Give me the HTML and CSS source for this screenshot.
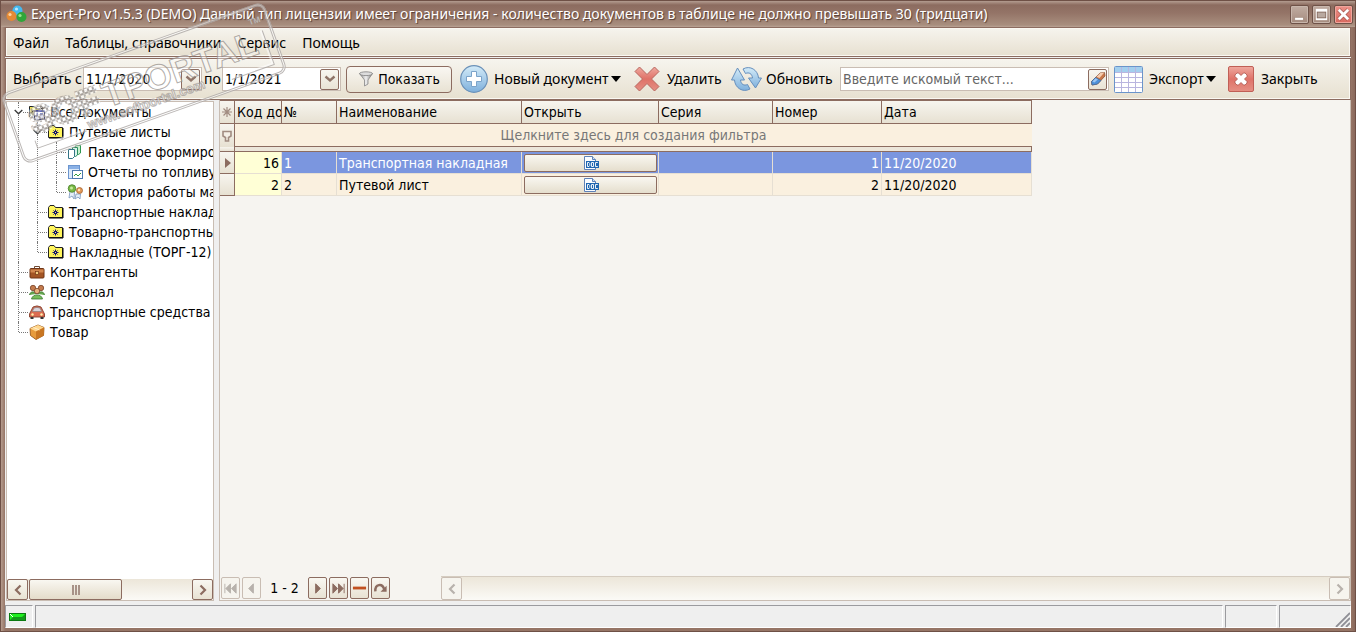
FILE: index.html
```html
<!DOCTYPE html>
<html lang="ru">
<head>
<meta charset="utf-8">
<title>Expert-Pro v1.5.3 (DEMO)</title>
<link rel="stylesheet" href="styles.css">
</head>
<body>
<svg class="defs" aria-hidden="true">
  <defs>
    <linearGradient id="blue" x1="0" y1="0" x2="0" y2="1"><stop offset="0" stop-color="#d3ebf8"/><stop offset="1" stop-color="#7fb0dc"/></linearGradient>
    <linearGradient id="red" x1="0" y1="0" x2="0" y2="1"><stop offset="0" stop-color="#efa99f"/><stop offset=".5" stop-color="#df7268"/><stop offset="1" stop-color="#e59084"/></linearGradient>
    <linearGradient id="metal" x1="0" y1="0" x2="1" y2="0"><stop offset="0" stop-color="#8a8a8a"/><stop offset=".5" stop-color="#f0f0f0"/><stop offset="1" stop-color="#777"/></linearGradient>
    <pattern id="dots" width="5" height="5" patternUnits="userSpaceOnUse"><rect x=".5" y=".5" width="4" height="4" rx="1" fill="#fff" fill-opacity=".5" stroke="#8e8783" stroke-opacity=".7" stroke-width=".9"/></pattern>
    <symbol id="folder" viewBox="0 0 16 16">
      <path d="M.5 13.500V3.500L2 1.500H6L7.500 3.500H14.500V13.500Z" fill="#fff55c" stroke="#222"/>
      <path d="M1 14H15V4" fill="none" stroke="#000" stroke-width="1"/>
      <path d="M7.500 5.500V11.500M4.500 8.500H10.500M5.500 6.500L9.500 10.500M9.500 6.500L5.500 10.500" stroke="#14146e" stroke-width="1"/>
      <rect x="7" y="8" width="1" height="1" fill="#fff55c"/>
    </symbol>
    <symbol id="doc" viewBox="0 0 16 16">
      <path d="M1.500 1.500H9.500L12.500 4.500V14.500H1.500Z" fill="#fafcff" stroke="#5e82b8"/>
      <path d="M9.500 1.500V4.500H12.500" fill="#cfe0f5" stroke="#5e82b8"/>
      <rect x="3" y="6" width="13" height="7" fill="#1f66b0"/>
      <path d="M4.500 7.500V11.500H6L6.800 10.500V8.500L6 7.500ZM8.500 7.500H10.500V11.500H8.500ZM14.800 7.500H12.500V11.500H14.800" fill="none" stroke="#fff" stroke-width=".9"/>
    </symbol>
    <symbol id="down" viewBox="0 0 12 8"><path d="M1.500 1.500L6 5.500L10.500 1.500" fill="none" stroke="#8f7468" stroke-width="2.400"/></symbol>
    <symbol id="left" viewBox="0 0 8 12"><path d="M6.500 1.500L2 6L6.500 10.500" fill="none" stroke="currentColor" stroke-width="2.200"/></symbol>
    <symbol id="right" viewBox="0 0 8 12"><path d="M1.500 1.500L6 6L1.500 10.500" fill="none" stroke="currentColor" stroke-width="2.200"/></symbol>
    <symbol id="open" viewBox="0 0 9 6"><path d="M.7 1L4.500 4.700L8.300 1" fill="none" stroke="#3b3b3b" stroke-width="1.400"/></symbol>
    <symbol id="caret" viewBox="0 0 10 6"><path d="M0 0H10L5 6Z" fill="#000"/></symbol>
  </defs>
</svg>
<div class="window">
  <header class="titlebar">
    <svg class="app-icon" viewBox="0 0 22 18"><circle cx="11.500" cy="5.500" r="5" fill="#45b9ee"/><circle cx="5.500" cy="11" r="5" fill="#e58a35"/><circle cx="15.500" cy="12" r="5" fill="#2fa63a"/><circle cx="10.500" cy="4" r="1.600" fill="#b8e8ff"/><circle cx="4" cy="9.500" r="1.600" fill="#ffd3a0"/><circle cx="14" cy="10.500" r="1.600" fill="#98e58e"/></svg>
    <h1 class="title">Expert-Pro v1.5.3 (DEMO) Данный тип лицензии имеет ограничения - количество документов в таблице не должно превышать 30 (тридцати)</h1>
    <div class="win-buttons">
      <button class="win-btn" aria-label="Свернуть"><svg viewBox="0 0 18 18"><rect x="4" y="12" width="9" height="3" fill="#fff" stroke="#9a8075" stroke-width=".6"/></svg></button>
      <button class="win-btn" aria-label="Развернуть"><svg viewBox="0 0 18 18"><rect x="3" y="3" width="12" height="12" fill="#fff"/><rect x="4.500" y="6.500" width="9" height="6" fill="#b9a9a0" stroke="#85695d"/></svg></button>
      <button class="win-btn close" aria-label="Закрыть окно"><svg viewBox="0 0 18 18"><path d="M4 4L14 14M14 4L4 14" stroke="#a55249" stroke-width="4.400"/><path d="M4 4L14 14M14 4L4 14" stroke="#fff" stroke-width="3"/></svg></button>
    </div>
  </header>
  <div class="client">
    <nav class="menu">
      <button>Файл</button><button>Таблицы, справочники</button><button>Сервис</button><button>Помощь</button>
    </nav>
    <div class="toolbar">
      <label class="from" for="from">Выбрать с</label>
      <div class="combo"><input id="from" type="text" value="11/1/2020"><button class="mini" aria-label="Календарь"><svg class="down"><use href="#down"/></svg></button></div>
      <label class="to" for="to">по</label>
      <div class="combo"><input id="to" type="text" value="1/1/2021"><button class="mini" aria-label="Календарь"><svg class="down"><use href="#down"/></svg></button></div>
      <button class="show"><svg class="i16" viewBox="0 0 16 16"><path d="M1.500 2.500L6.500 9V15L10 13V9L14.500 2.500Z" fill="url(#metal)" stroke="#888" stroke-width=".8"/><ellipse cx="8" cy="2.700" rx="6.500" ry="1.900" fill="#ddd" stroke="#808080" stroke-width=".8"/></svg>Показать</button>
      <button class="tool new"><svg class="i28" viewBox="0 0 28 28"><circle cx="14" cy="14" r="13.300" fill="url(#blue)" stroke="#6b91b8" stroke-width="1.200"/><path d="M11.500 6.500H16.500V11.500H21.500V16.500H16.500V21.500H11.500V16.500H6.500V11.500H11.500Z" fill="#fff" stroke="#7ba3c9" stroke-width="1"/></svg><span>Новый документ</span><svg class="caret"><use href="#caret"/></svg></button>
      <button class="tool del"><svg class="i26" viewBox="0 0 26 26"><path d="M5.500 1L13 8.500L20.500 1L25 5.500L17.500 13L25 20.500L20.500 25L13 17.500L5.500 25L1 20.500L8.500 13L1 5.500Z" fill="url(#red)" stroke="#b8665e" stroke-width="1" stroke-linejoin="round"/></svg><span>Удалить</span></button>
      <button class="tool refresh"><svg class="i31" viewBox="0 0 31 26"><path d="M12 3C19 -1 27 4 27.500 12H30.500L24.500 22L17.500 12H21.500C21 7.500 18 6 14.500 7.500Z" fill="url(#blue)" stroke="#668fbd" stroke-width="1" stroke-linejoin="round"/><path d="M19 23C12 27 4 22 3.500 14H.5L6.500 2L13.500 14H9.500C10 18.500 13 20 16.500 18.500Z" fill="url(#blue)" stroke="#668fbd" stroke-width="1" stroke-linejoin="round"/></svg><span>Обновить</span></button>
      <div class="combo search"><input type="text" aria-label="Поиск" placeholder="Введите искомый текст..."><button class="mini" aria-label="Очистить"><svg class="i16" viewBox="0 0 16 16"><path d="M1.500 10.500L10 2L14.500 1.500L15 5L7.500 13L2 14Z" fill="#c9784a" stroke="#8a5238" stroke-width=".8"/><path d="M1.500 10.500L5.500 6.500L11 9.500L7.500 13L2 14Z" fill="#4e91da" stroke="#41699a" stroke-width=".7"/><path d="M6.500 5.800L10.300 2L14.300 1.600L9.500 7Z" fill="#f5cdb0"/><path d="M2.500 10.500L5.500 7.200L8 8.300L4.500 11.500Z" fill="#9cc6f2"/></svg></button></div>
      <button class="tool export"><svg class="i29" viewBox="0 0 29 27"><rect x=".5" y=".5" width="28" height="26" rx="1" fill="#fff" stroke="#6a94ca"/><rect x="1" y="1" width="27" height="5" fill="#a3cfee"/><path d="M1 6.500H28M1 11.500H28M1 16.500H28M1 21.500H28M7.500 1V26M14.500 1V26M21.500 1V26" stroke="#b9b5df"/></svg><span>Экспорт</span><svg class="caret"><use href="#caret"/></svg></button>
      <button class="tool quit"><svg class="i26" viewBox="0 0 26 26"><rect x=".5" y=".5" width="25" height="25" rx="1.500" fill="url(#red)" stroke="#c05f56"/><path d="M7 9L9 7H10.500L13 9.500L15.500 7H17L19 9V10.500L16.500 13L19 15.500V17L17 19H15.500L13 16.500L10.500 19H9L7 17V15.500L9.500 13L7 10.500Z" fill="#fff" stroke="#a9534a" stroke-width=".8"/></svg><span>Закрыть</span></button>
    </div>
    <main class="main">
      <aside class="side">
        <ul class="tree">
          <li><div class="row"><svg class="open"><use href="#open"/></svg><svg class="i16" viewBox="0 0 16 16"><path d="M.5 13V2.500H5L6.500 4.500H11" fill="#f7ef43" stroke="#222"/><path d="M8 2.500H13.500V5M11.500 3.500L13.500 5.500L15.500 3.500" fill="none" stroke="#111"/><path d="M1 12L4 6.500H12" fill="#fdf68a" stroke="#222"/><rect x="5.500" y="6.500" width="10" height="9" fill="#fff" stroke="#111b63"/><rect x="5" y="6" width="11" height="2" fill="#17269b"/><path d="M7 10H9M11 10H14M7 12H9M11 12H14M7 14H9M11 14H14" stroke="#17269b"/></svg>Все документы</div>
            <ul>
              <li><div class="row"><svg class="open"><use href="#open"/></svg><svg class="i16"><use href="#folder"/></svg>Путевые листы</div>
                <ul>
                  <li><div class="row"><svg class="i16" viewBox="0 0 16 16"><path d="M8.500 1.500H13.500V9L11.500 10.500H8.500Z" fill="#c9efcf" stroke="#2e9650"/><path d="M5.500 3.500H10.500V11L8.500 12.500H5.500Z" fill="#d9f2ea" stroke="#2b8f5f"/><path d="M1.500 5.500H7.500V12.500L5.500 14.500H1.500Z" fill="#fff" stroke="#347486"/></svg>Пакетное формирование</div></li>
                  <li><div class="row"><svg class="i16" viewBox="0 0 16 16"><rect x="1.500" y="1.500" width="11" height="13" fill="#dceafa" stroke="#6b95cf"/><rect x="2" y="2" width="10" height="3" fill="#8ab1e6"/><rect x="5.500" y="6.500" width="10" height="8" fill="#fff" stroke="#4b79ad"/><path d="M7 12L9 10L11 12L14 9" fill="none" stroke="#2f9a3e"/></svg>Отчеты по топливу</div></li>
                  <li><div class="row"><svg class="i16" viewBox="0 0 16 16"><path d="M3 7L2 14L5 12L7 15L7.500 8ZM9 10L8 15L11 13L13 15L13.500 10Z" fill="#e5effa" stroke="#7896bd" stroke-width=".8"/><circle cx="5" cy="4.500" r="3.800" fill="#79b944" stroke="#4a7f2c" stroke-width=".8"/><circle cx="12.500" cy="6.500" r="3" fill="#e39a59" stroke="#a5622e" stroke-width=".8"/><circle cx="4.500" cy="4" r="1.500" fill="#c8ec9d"/><circle cx="12" cy="6" r="1.200" fill="#ffe2b7"/></svg>История работы машин</div></li>
                </ul>
              </li>
              <li><div class="row"><svg class="i16"><use href="#folder"/></svg>Транспортные накладные</div></li>
              <li><div class="row"><svg class="i16"><use href="#folder"/></svg>Товарно-транспортные</div></li>
              <li><div class="row"><svg class="i16"><use href="#folder"/></svg>Накладные (ТОРГ-12)</div></li>
            </ul>
          </li>
          <li><div class="row"><svg class="i16" viewBox="0 0 16 16"><path d="M5.500 5V2.500H10.500V5" fill="none" stroke="#714b35"/><rect x="1" y="4.500" width="14" height="9.500" rx="1" fill="#a35525" stroke="#6f3517"/><path d="M1.500 5.500H14.500V8.500H1.500Z" fill="#d28850"/><rect x="6.500" y="7.500" width="3" height="3" fill="#f3cf82" stroke="#6f3517" stroke-width=".7"/></svg>Контрагенты</div></li>
          <li><div class="row"><svg class="i16" viewBox="0 0 16 16"><circle cx="4" cy="4" r="2.700" fill="#c37b4d" stroke="#784329" stroke-width=".8"/><circle cx="12" cy="4" r="2.700" fill="#c37b4d" stroke="#784329" stroke-width=".8"/><path d="M.5 11C1 7 6 7 7 10M9 10C10 7 15 7 15.500 11" fill="#66a851" stroke="#39752f" stroke-width=".8"/><circle cx="8" cy="7" r="2.700" fill="#e7af7b" stroke="#784329" stroke-width=".8"/><path d="M2.500 15C3.500 9.500 12.500 9.500 13.500 15Z" fill="#76bd5a" stroke="#39752f" stroke-width=".8"/></svg>Персонал</div></li>
          <li><div class="row"><svg class="i16" viewBox="0 0 16 16"><path d="M1.500 8L4 3Q8 .8 12 3L14.500 8L15.500 10V13H.5V10Z" fill="#dc6b51" stroke="#85402e" stroke-width=".9"/><path d="M3.300 7.500L5 4Q8 2.800 11 4L12.700 7.500Z" fill="#d9d4dd" stroke="#867b79" stroke-width=".7"/><circle cx="3.500" cy="10.500" r="1.200" fill="#fff2ab"/><circle cx="12.500" cy="10.500" r="1.200" fill="#fff2ab"/><path d="M1.500 13H4.500V15H1.500ZM11.500 13H14.500V15H11.500Z" fill="#333"/></svg>Транспортные средства</div></li>
          <li><div class="row"><svg class="i16" viewBox="0 0 16 16"><path d="M1 4.500L9 1L15 3.500L14.500 11.500L7 15.500L1.500 11.500Z" fill="#e79b3c" stroke="#9b5a1c" stroke-width=".9"/><path d="M1 4.500L9 1L15 3.500L7 7.500Z" fill="#ffd68d"/><path d="M7 7.500L15 3.500L14.500 11.500L7 15.500Z" fill="#c97622"/><path d="M4.500 3.500L10.500 6" stroke="#fff0ca"/></svg>Товар</div></li>
        </ul>
        <div class="scroll">
          <button class="sb" aria-label="Влево"><svg class="arr"><use href="#left"/></svg></button>
          <div class="track"><div class="thumb"><i></i><i></i><i></i></div></div>
          <button class="sb" aria-label="Вправо"><svg class="arr"><use href="#right"/></svg></button>
        </div>
      </aside>
      <section class="content">
        <div class="gridwrap">
          <table class="grid">
            <colgroup><col class="c-ind"><col class="c-key"><col class="c-no"><col class="c-name"><col class="c-open"><col class="c-ser"><col class="c-num"><col class="c-date"></colgroup>
            <thead>
              <tr class="head"><th class="ind"><svg class="i12" viewBox="0 0 12 12"><path d="M6 1V11M1 6H11M2.500 2.500L9.500 9.500M9.500 2.500L2.500 9.500" stroke="#a18c81" stroke-width="1.200"/></svg></th><th>Код док</th><th>№</th><th>Наименование</th><th>Открыть</th><th>Серия</th><th>Номер</th><th>Дата</th></tr>
              <tr class="filter"><td class="ind"><svg class="i12" viewBox="0 0 12 12"><path d="M2 1.500H10V6L7.500 7.500V11H4.500V7.500L2 6Z" fill="#f4efe6" stroke="#a18c81" stroke-width="1.600"/></svg></td><td colspan="7">Щелкните здесь для создания фильтра</td></tr>
              <tr class="sep"><td class="ind"></td><td colspan="7"></td></tr>
            </thead>
            <tbody>
              <tr class="sel"><td class="ind"><svg class="i12" viewBox="0 0 12 12"><path d="M4 1L10 6L4 11Z" fill="#8c6c60"/></svg></td><td class="key">16</td><td>1</td><td>Транспортная накладная</td><td class="btncell"><button class="open-doc" aria-label="Открыть документ 16"><svg class="i16"><use href="#doc"/></svg></button></td><td></td><td class="num">1</td><td>11/20/2020</td></tr>
              <tr><td class="ind"></td><td class="key">2</td><td>2</td><td>Путевой лист</td><td class="btncell"><button class="open-doc" aria-label="Открыть документ 2"><svg class="i16"><use href="#doc"/></svg></button></td><td></td><td class="num">2</td><td>11/20/2020</td></tr>
            </tbody>
          </table>
        </div>
        <div class="navbar">
          <button class="nb" disabled aria-label="Первая"><svg viewBox="0 0 16 16"><path d="M2 3V13M8 3L3 8L8 13ZM14 3L9 8L14 13Z" fill="currentColor" stroke="currentColor"/></svg></button>
          <button class="nb" disabled aria-label="Назад"><svg viewBox="0 0 16 16"><path d="M10 3L5 8L10 13Z" fill="currentColor" stroke="currentColor"/></svg></button>
          <span class="count">1 - 2</span>
          <button class="nb" aria-label="Вперёд"><svg viewBox="0 0 16 16"><path d="M6 3L11 8L6 13Z" fill="currentColor" stroke="currentColor"/></svg></button>
          <button class="nb" aria-label="Последняя"><svg viewBox="0 0 16 16"><path d="M14 3V13M8 3L13 8L8 13ZM2 3L7 8L2 13Z" fill="currentColor" stroke="currentColor"/></svg></button>
          <button class="nb" aria-label="Удалить запись"><svg viewBox="0 0 16 16"><path d="M1 7.500H15" stroke="#c2501f" stroke-width="3"/></svg></button>
          <button class="nb" aria-label="Обновить записи"><svg viewBox="0 0 16 16"><path d="M2.500 11C2 3 10 2 12 9" fill="none" stroke="currentColor" stroke-width="2.600"/><path d="M8 11.500H14.500V5Z" fill="currentColor"/></svg></button>
          <div class="scroll off">
            <button class="sb" disabled aria-label="Влево"><svg class="arr"><use href="#left"/></svg></button>
            <div class="track"></div>
            <button class="sb" disabled aria-label="Вправо"><svg class="arr"><use href="#right"/></svg></button>
          </div>
        </div>
      </section>
    </main>
    <footer class="status">
      <div class="pane led"><svg class="lamp" viewBox="0 0 17 8"><rect width="17" height="8" fill="#0b7a10"/><rect x="1" y="1" width="15" height="6" fill="#149a1b"/><path d="M1 1H16L13 4H4L1 7Z" fill="#1ff01f"/><path d="M1 1L4 4" stroke="#fff"/></svg></div><div class="pane wide"></div><div class="pane p1"></div>
      <div class="pane p2"><svg class="grip" viewBox="0 0 15 15"><path d="M1 15L15 1M6 15L15 6M11 15L15 11" stroke="#8f8f96" stroke-width="1.800"/></svg></div>
    </footer>
  </div>
</div>
<svg class="stamp" viewBox="0 0 300 170" aria-hidden="true">
  <g transform="translate(144 83) rotate(-19.500)">
    <g class="halo"><rect x="-138" y="-36" width="276" height="72" rx="7"/><path d="M-121 18V25H-70M84 25H128V-10"/></g>
    <g class="line"><rect x="-139" y="-37" width="278" height="74" rx="8"/><rect x="-137" y="-35" width="274" height="70" rx="6"/><path d="M-122 18V26H-70M84 26H129V-10"/></g>
    <text class="mesh" x="-120" y="11">SOF</text>
    <text class="word" x="-43" y="11">TPORTAL</text>
    <text class="url" x="-67" y="25">www.softportal.com</text>
    <text class="tm" x="119" y="-19">TM</text>
  </g>
</svg>
</body>
</html>
```
FILE: styles.css
```css
* { box-sizing: border-box; }
body { margin: 0; font: 14px/20px "Noto Sans", "Open Sans", sans-serif; color: #000; }
button, input { font: inherit; color: inherit; margin: 0; padding: 0; border: 0; background: none; }
svg { display: block; flex: none; }
.defs { position: absolute; width: 0; height: 0; }
.i12 { width: 12px; height: 12px; }
.i16 { width: 16px; height: 16px; }
.i26 { width: 26px; height: 26px; }
.i28 { width: 28px; height: 28px; }
.i29 { width: 29px; height: 27px; }
.i31 { width: 31px; height: 26px; }
.window { min-height: 100vh; display: flex; flex-direction: column; padding: 0 4px 3px; border: 1px solid #6e5046; background: linear-gradient(90deg, #b59c8e, #967566 4px, #967566 calc(100% - 4px), #8a695c); }
.titlebar { height: 26px; display: flex; align-items: center; margin: 0 -4px; padding: 0 2px 0 5px; background: linear-gradient(#b39c90, #8c6c60 4px, #947467 12px, #a88e7e 24px, #b9a294); }
.app-icon { width: 22px; height: 18px; margin-right: 3px; }
.title { flex: 1; margin: 0; font-size: 14px; font-weight: 400; line-height: 20px; color: #fff; white-space: nowrap; overflow: hidden; text-shadow: 1px 1px 1px #543c33; }
.win-buttons { display: flex; gap: 3px; }
.win-btn { width: 19px; height: 19px; border: 1px solid #6e5248; border-radius: 2px; background: linear-gradient(#c0aca2, #a58b7e); box-shadow: inset 0 0 0 1px #c8b6ac; }
.win-btn svg { width: 17px; height: 17px; }
.win-btn.close { background: linear-gradient(#ec9289, #d9685e); box-shadow: inset 0 0 0 1px #f0a59c; }
.client { flex: 1; display: flex; flex-direction: column; background: #efefef; }
.menu { height: 30px; display: flex; align-items: center; gap: 16px; padding: 2px 7px 0; border: 1px solid #8c6c60; background: linear-gradient(#f6f4ee, #e7e0d0); box-shadow: inset 0 0 0 1px #faf8f2; }
.toolbar { height: 42px; margin-top: 1px; display: flex; align-items: center; padding: 0 7px; border: 1px solid #8c6c60; background: linear-gradient(#f6f4ee, #e7e0d0); box-shadow: inset 0 0 0 1px #faf8f2; white-space: nowrap; }
.from { width: 70px; }
.to { width: 20px; padding-left: 2px; }
.combo { display: flex; align-items: center; width: 119px; height: 24px; padding: 1px; border: 1px solid #c9bdb3; background: #fff; }
.combo input { flex: 1; min-width: 0; height: 20px; padding: 0 1px; outline: 0; }
.combo input::placeholder { color: #666; opacity: 1; }
.combo, .show, .tree, .grid, .count { font-family: "DejaVu Sans Condensed", "Noto Sans", sans-serif; font-size: 14px; }
.mini { width: 19px; height: 21px; display: grid; place-items: center; border: 1px solid #8c6c60; border-radius: 2px; background: linear-gradient(#f8f6f0, #e9e3d5); }
.down { width: 12px; height: 8px; }
.show { display: flex; align-items: center; justify-content: center; gap: 4px; width: 106px; height: 27px; margin: 0 8px 0 5px; border: 1px solid #8c6c60; border-radius: 4px; background: linear-gradient(#f9f7f2, #e8e2d3); }
.tool { display: flex; align-items: center; height: 38px; }
.new { width: 174px; gap: 6px; }
.del { width: 97px; gap: 7px; }
.refresh { width: 109px; gap: 4px; }
.export { width: 114px; gap: 6px; }
.quit { gap: 7px; }
.tool .caret { width: 10px; height: 6px; margin-left: -4px; }
.search { width: 269px; margin-right: 5px; }
.main { flex: 1; display: flex; min-height: 0; }
.side { width: 208px; margin: 1px 5px 1px 1px; display: flex; flex-direction: column; border: 1px solid #c9bdb3; background: #fff; }
.tree { flex: 1; overflow: hidden; }
.tree, .tree ul { margin: 0; padding: 0; list-style: none; }
.tree ul { margin-left: 19px; }
.tree li { position: relative; }
.tree li::before { content: ""; position: absolute; left: 11px; top: 0; bottom: 0; border-left: 1px dotted #777; }
.tree li:last-child::before { bottom: auto; height: 10px; }
.row { position: relative; display: flex; align-items: center; gap: 5px; height: 20px; padding-left: 22px; white-space: nowrap; }
.row::before { content: ""; position: absolute; left: 12px; top: 10px; width: 9px; border-top: 1px dotted #777; }
.row .open { position: absolute; left: 7px; top: 7px; width: 9px; height: 6px; background: #fff; }
.scroll { display: flex; height: 21px; color: #8c6c60; background: linear-gradient(#ece6d9, #fbfaf6); }
.sb { width: 21px; display: grid; place-items: center; border: 1px solid #8c6c60; border-radius: 2px; background: linear-gradient(#f9f7f1, #e8e2d3); }
.arr { width: 8px; height: 12px; }
.track { flex: 1; display: flex; padding: 0 1px; }
.thumb { width: 93px; display: flex; align-items: center; justify-content: center; gap: 1px; border: 1px solid #8c6c60; border-radius: 2px; background: linear-gradient(#f9f7f1, #e4dcca); }
.thumb i { width: 2px; height: 10px; background: #a89287; }
.content { flex: 1; min-width: 0; display: flex; flex-direction: column; margin-bottom: 1px; border: 1px solid #c9bdb3; border-top: 0; background: #f6f4f0; }
.gridwrap { flex: 1; overflow: hidden; }
.grid { width: 812px; table-layout: fixed; border-collapse: separate; border-spacing: 0; border-top: 1px solid #8c6c60; line-height: 20px; }
.c-ind { width: 15px; } .c-key { width: 47px; } .c-no { width: 55px; } .c-name { width: 185px; } .c-open { width: 137px; } .c-ser { width: 114px; } .c-num { width: 109px; } .c-date { width: 150px; }
.grid th, .grid td { padding: 0 2px; text-align: left; font-weight: 400; white-space: nowrap; overflow: hidden; }
.head th { height: 23px; border-right: 1px solid #8c6c60; border-bottom: 1px solid #8c6c60; background: linear-gradient(#f7f5ef, #e7e1d2); }
.grid .filter td { height: 23px; border-bottom: 1px solid #8c6c60; background: #faf0df; text-align: center; color: #777; }
.sep td { height: 5px; border-bottom: 1px solid #8c6c60; border-right: 1px solid #8c6c60; background: #ece6da; }
.grid tr .ind { padding: 0 1px; border-right: 1px solid #8c6c60; background: linear-gradient(#f7f5ef, #e7e1d2); }
.grid .filter td.ind { border-bottom: 0; }
tbody td { height: 22px; border-right: 1px solid #e6dfd3; border-bottom: 1px solid #e6dfd3; background: #faf0df; }
tbody td.ind { border-bottom: 1px solid #8c6c60; }
.grid .key { text-align: right; background: #ffffd6; }
.grid .num { text-align: right; }
.sel td:not(.ind):not(.key) { background: #7b96df; color: #fff; }
.grid .btncell { padding: 0 1px 0 2px; }
.open-doc { width: 100%; height: 18px; display: flex; align-items: center; justify-content: center; border: 1px solid #8c6c60; border-radius: 2px; background: linear-gradient(#f9f7f1, #e5decd); }
.navbar { display: flex; align-items: center; gap: 2px; height: 24px; padding-left: 1px; }
.nb { width: 19px; height: 22px; border: 1px solid #8c6c60; border-radius: 2px; color: #8c6c60; background: linear-gradient(#f9f7f1, #e8e2d3); display: grid; place-items: center; }
.nb svg { width: 15px; height: 15px; }
.nb:disabled, .sb:disabled { color: #b8b2ac; border-color: #c9bdb3; background: #f6f4ee; }
.count { width: 43px; text-align: center; }
.navbar .scroll { flex: 1; height: 24px; margin-left: 49px; border-top: 1px solid #d5ccc0; }
.status { display: flex; gap: 2px; height: 26px; padding: 3px 0 0; background: #efefef; }
.pane { border: 1px solid #9b9b9f; border-right-color: #fff; border-bottom-color: #fff; }
.led { width: 28px; display: flex; align-items: center; padding-left: 3px; }
.lamp { width: 17px; height: 8px; }
.wide { flex: 1; }
.p1 { width: 52px; }
.p2 { width: 72px; display: flex; align-items: flex-end; justify-content: flex-end; }
.grip { width: 15px; height: 15px; }
.stamp { position: absolute; left: 0; top: 0; width: 300px; height: 170px; pointer-events: none; }
.halo { fill: none; stroke: #fff; stroke-opacity: .5; stroke-width: 3; }
.line { fill: none; stroke: #8e8783; stroke-opacity: .6; stroke-width: 1; }
.stamp text { font-family: "Liberation Sans", sans-serif; }
.stamp .word { font-size: 35px; font-weight: 700; fill: #fff; fill-opacity: .4; stroke: #8e8783; stroke-opacity: .7; stroke-width: 1; }
.stamp .mesh { font-size: 35px; font-weight: 700; fill: url(#dots); stroke: url(#dots); stroke-width: 4; }
.stamp .url { font-size: 13px; font-weight: 700; fill: #fff; fill-opacity: .6; stroke: #8e8783; stroke-opacity: .6; stroke-width: 1; }
.stamp .tm { font-size: 8px; fill: #fff; stroke: #8e8783; stroke-opacity: .5; stroke-width: 1; }
```
